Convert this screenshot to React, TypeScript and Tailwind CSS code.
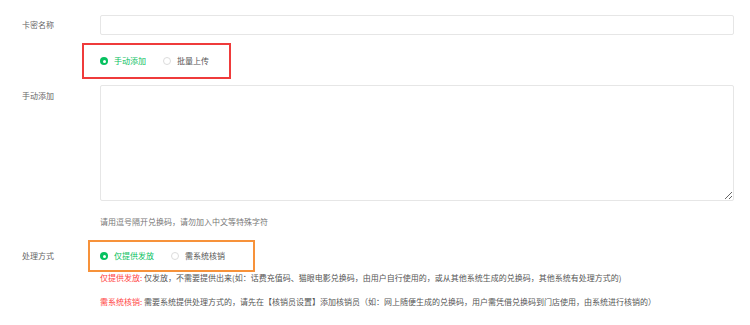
import React from "react";

function Radio({ checked, label }: { checked?: boolean; label: string }) {
  return (
    <div className="flex items-center gap-[6px]">
      {checked ? (
        <span className="w-[8px] h-[8px] rounded-full bg-[#07c160] flex items-center justify-center">
          <span className="w-[3px] h-[3px] rounded-full bg-white" />
        </span>
      ) : (
        <span className="w-[8px] h-[8px] rounded-full border border-[#dcdcdc] bg-white" />
      )}
      <span className={checked ? "text-[#07c160]" : "text-[#555]"}>{label}</span>
    </div>
  );
}

export default function App() {
  return (
    <div
      className="w-[750px] h-[325px] bg-white pt-[15px] pl-[22px] pr-[16px] text-[8px] leading-[12px] text-[#555]"
      style={{ fontFamily: '"Noto Sans CJK SC", "Noto Sans", sans-serif' }}
    >
      <div className="flex items-center h-[20px]">
        <div className="w-[78px] text-[#666]">卡密名称</div>
        <input className="flex-1 h-[20px] border border-[#e6e6e6] rounded-[2px] outline-none" />
      </div>

      <div className="mt-[8px] ml-[60px] w-[149px] h-[36px] border-2 border-[#ef3b3b] flex items-center pl-[16px] gap-[17px]">
        <Radio checked label="手动添加" />
        <Radio label="批量上传" />
      </div>

      <div className="mt-[6px] flex">
        <div className="w-[78px] pt-[5px] text-[#666]">手动添加</div>
        <textarea className="flex-1 h-[116px] border border-[#e6e6e6] rounded-[2px] outline-none" />
      </div>

      <div className="mt-[15px] ml-[78px] text-[#777]">请用逗号隔开兑换码，请勿加入中文等特殊字符</div>

      <div className="mt-[12px] flex items-center">
        <div className="w-[66px] text-[#666]">处理方式</div>
        <div className="w-[167px] h-[32px] border-2 border-[#f7923a] flex items-center pl-[10px] gap-[17px]">
          <Radio checked label="仅提供发放" />
          <Radio label="需系统核销" />
        </div>
      </div>

      <div className="ml-[78px] whitespace-nowrap">
        <span className="text-[#f44]">仅提供发放:</span> 仅发放，不需要提供出来(如：话费充值码、猫眼电影兑换码，由用户自行使用的，或从其他系统生成的兑换码，其他系统有处理方式的)
      </div>
      <div className="mt-[12px] ml-[78px] whitespace-nowrap">
        <span className="text-[#f44]">需系统核销:</span> 需要系统提供处理方式的，请先在【核销员设置】添加核销员（如：网上随便生成的兑换码，用户需凭借兑换码到门店使用，由系统进行核销的）
      </div>
    </div>
  );
}
